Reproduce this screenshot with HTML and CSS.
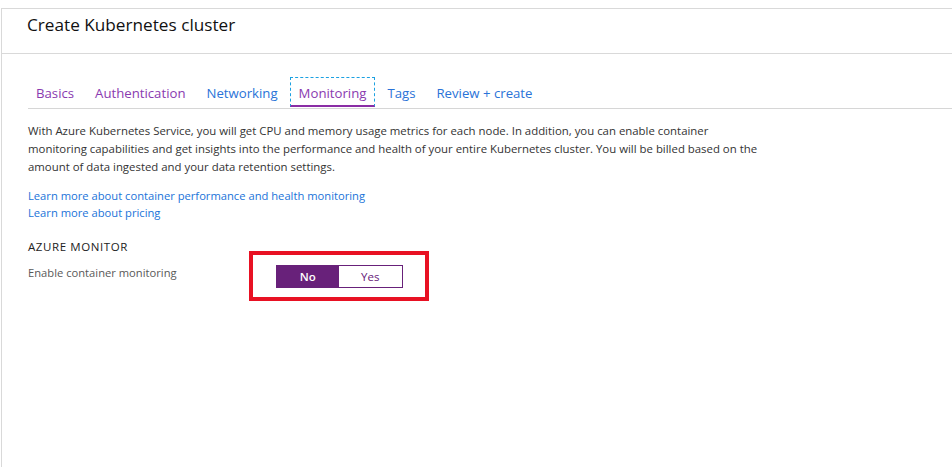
FILE: index.html
```html
<!DOCTYPE html>
<html>
<head>
<meta charset="utf-8">
<link rel="stylesheet" href="styles.css">
</head>
<body>
<div class="blade">
  <header class="blade-header">
    <h1 class="title">Create Kubernetes cluster</h1>
  </header>
  <div class="content">
    <nav class="tabs">
      <a class="tab visited">Basics</a>
      <a class="tab visited">Authentication</a>
      <a class="tab">Networking</a>
      <a class="tab visited selected">Monitoring</a>
      <a class="tab">Tags</a>
      <a class="tab">Review + create</a>
    </nav>
    <p class="desc">With Azure Kubernetes Service, you will get CPU and memory usage metrics for each node. In addition, you can enable container monitoring capabilities and get insights into the performance and health of your entire Kubernetes cluster. You will be billed based on the amount of data ingested and your data retention settings.</p>
    <div class="links">
      <a class="link">Learn more about container performance and health monitoring</a>
      <a class="link">Learn more about pricing</a>
    </div>
    <h2 class="section">AZURE MONITOR</h2>
    <div class="field">
      <div class="label">Enable container monitoring</div>
      <div class="highlight">
        <div class="toggle">
          <span class="opt on">No</span>
          <span class="opt">Yes</span>
        </div>
      </div>
    </div>
  </div>
</div>
</body>
</html>
```
FILE: styles.css
```css
html, body {
  margin: 0;
  padding: 0;
  background: #fff;
  height: 100%;
}
body {
  font-family: "Open Sans", "Noto Sans", sans-serif;
  color: #333;
  padding-top: 8px;
  padding-left: 1px;
  box-sizing: border-box;
  overflow: hidden;
}
.blade {
  border-top: 1px solid #d9d9d9;
  border-left: 1px solid #d9d9d9;
  height: 100%;
  box-sizing: border-box;
}
.blade-header {
  height: 44px;
  border-bottom: 1px solid #d9d9d9;
  padding-left: 25px;
}
.title {
  margin: 0;
  padding-top: 4px;
  font-size: 17.2px;
  font-weight: 400;
  color: #111;
  line-height: 24px;
}
.content {
  padding-left: 26px;
}
.tabs {
  display: flex;
  margin-top: 23px;
  border-bottom: 1px solid #d6d6d6;
  height: 32px;
  box-sizing: border-box;
}
.tab {
  font-size: 13.2px;
  line-height: 16px;
  padding: 7px 8px 4px;
  margin-right: 3px;
  color: #2a73d8;
  border: 1px solid transparent;
  border-bottom: 2px solid transparent;
  height: 30px;
  box-sizing: border-box;
  white-space: nowrap;
}
.tab:first-child { margin-left: -1px; }
.tab.visited { color: #8a3ab0; }
.tab.selected {
  border: 1px dashed #1ba1e2;
  border-bottom: 2px solid #8a2da5;
}
.desc {
  margin: 13px 0 0;
  font-size: 11.4px;
  line-height: 18px;
  width: 740px;
  color: #333;
}
.links {
  margin-top: 11px;
  display: flex;
  flex-direction: column;
}
.link {
  font-size: 11.2px;
  line-height: 17px;
  color: #1a73d9;
}
.section {
  margin: 19px 0 0;
  font-size: 11.5px;
  letter-spacing: 0.6px;
  font-weight: 400;
  color: #222;
  line-height: 14px;
}
.field {
  display: flex;
  align-items: flex-start;
  margin-top: -3px;
}
.label {
  width: 221px;
  font-size: 11.2px;
  color: #595959;
  padding-top: 14px;
  line-height: 16px;
}
.highlight {
  border: 4px solid #e81123;
  width: 172px;
  height: 42px;
  display: flex;
  align-items: center;
  justify-content: center;
}
.toggle {
  display: flex;
  border: 1px solid #68217a;
  width: 127px;
  height: 23px;
  box-sizing: border-box;
}
.opt {
  flex: 1;
  text-align: center;
  font-size: 11.5px;
  line-height: 21px;
  color: #68217a;
}
.opt.on {
  background: #68217a;
  color: #fff;
  font-weight: 600;
}
```
